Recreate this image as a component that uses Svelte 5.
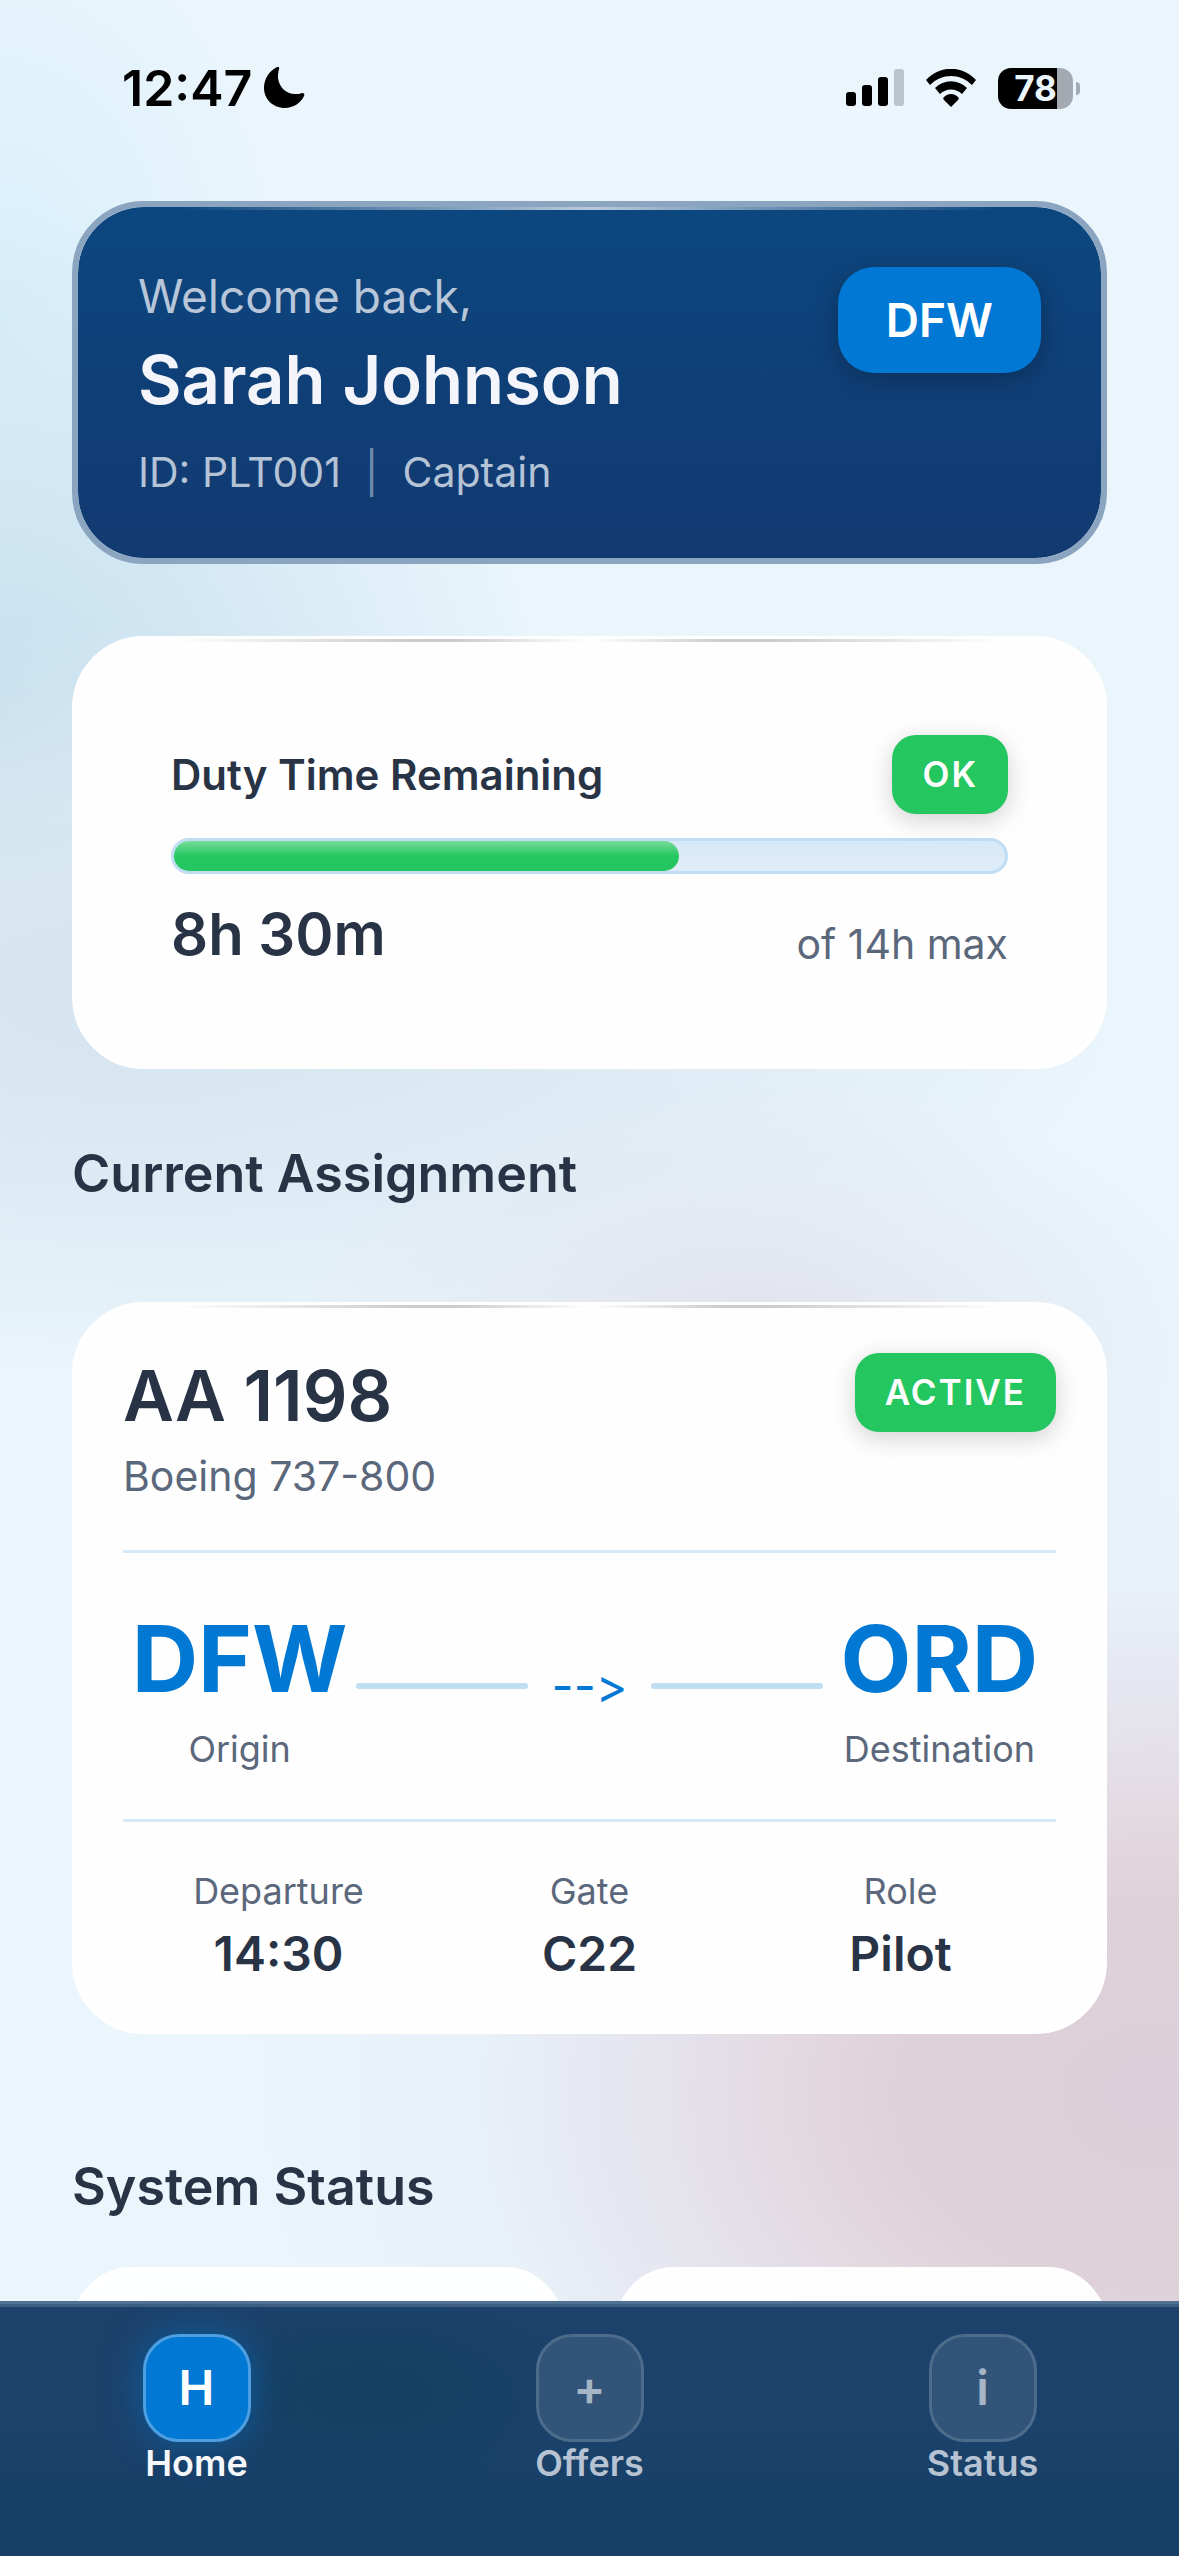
<script lang="ts">
  let active = 'Home';

  const dutyHours = 8.5;
  const maxHours = 14;

  const details = [
    { label: 'Departure', value: '14:30' },
    { label: 'Gate', value: 'C22' },
    { label: 'Role', value: 'Pilot' },
  ];

  const tabs = [
    { name: 'Home', glyph: 'H' },
    { name: 'Offers', glyph: '+' },
    { name: 'Status', glyph: 'i' },
  ];
</script>

<div class="app">
  <header class="status-bar">
    <div class="clock">
      <span>12:47</span>
      <svg width="42" height="42" viewBox="0 0 42 42" aria-hidden="true">
        <path d="M15 2C14 5 14 9 14 11c1 9 8 16 17 16 3 0 5 0 7-1 2 0 3 1 2 3-3 7-11 12-19 12C9 41 0 32 0 21 0 12 5 4 13 0c1 0 3 0 2 2z" />
      </svg>
    </div>
    <div class="signals">
      <svg width="58" height="38" viewBox="0 0 58 38" aria-hidden="true">
        <rect x="0" y="23" width="10" height="14" rx="3" />
        <rect x="16" y="16" width="10" height="21" rx="3" />
        <rect x="32" y="8" width="10" height="29" rx="3" />
        <rect x="48" y="0" width="10" height="37" rx="3" fill="#bbc4ca" />
      </svg>
      <svg width="50" height="38" viewBox="0 0 50 38" aria-hidden="true">
        <path d="M0 11C14-4 36-4 50 11l-4 5C34 4 16 4 4 16z" />
        <path d="M9 19c9-9 23-9 32 0l-5 6c-6-6-16-6-22 0z" />
        <path d="M18 28c4-4 10-4 14 0 1 1 1 2 0 3l-7 7-7-7c-1-1-1-2 0-3z" />
      </svg>
      <div class="battery"><span>78</span></div>
    </div>
  </header>

  <main>
    <section class="welcome">
      <div>
        <p class="greeting">Welcome back,</p>
        <h1>Sarah Johnson</h1>
        <p class="ident">
          <span>ID: PLT001</span><span class="pipe">|</span><span>Captain</span>
        </p>
      </div>
      <button class="base">DFW</button>
    </section>

    <section class="card duty">
      <div class="row">
        <h3 id="duty">Duty Time Remaining</h3>
        <span class="badge">OK</span>
      </div>
      <div class="track" role="progressbar" aria-labelledby="duty" aria-valuenow={dutyHours} aria-valuemax={maxHours}>
        <div class="fill" style="width: {(dutyHours / maxHours) * 100}%"></div>
      </div>
      <div class="row bottom">
        <strong>8h 30m</strong>
        <span class="muted">of 14h max</span>
      </div>
    </section>

    <h2>Current Assignment</h2>

    <section class="card flight">
      <div class="flight-head">
        <div>
          <h3>AA 1198</h3>
          <p class="muted">Boeing 737-800</p>
        </div>
        <span class="badge">ACTIVE</span>
      </div>

      <div class="route">
        <div class="stop">
          <strong>DFW</strong>
          <span>Origin</span>
        </div>
        <div class="path">
          <i></i>
          <span>--&gt;</span>
          <i></i>
        </div>
        <div class="stop">
          <strong>ORD</strong>
          <span>Destination</span>
        </div>
      </div>

      <dl>
        {#each details as item}
          <div>
            <dt>{item.label}</dt>
            <dd>{item.value}</dd>
          </div>
        {/each}
      </dl>
    </section>

    <h2 class="system">System Status</h2>

    <div class="systems">
      <article></article>
      <article></article>
    </div>
  </main>

  <nav>
    {#each tabs as tab}
      <button class:active={active === tab.name} on:click={() => (active = tab.name)}>
        <span class="icon">{tab.glyph}</span>
        <span>{tab.name}</span>
      </button>
    {/each}
  </nav>
</div>

<style>
  :global(body) {
    background: #eaf5fc;
  }

  .app {
    min-height: 100vh;
    box-sizing: border-box;
    font-family: Inter, "Liberation Sans", sans-serif;
    color: #283446;
    background:
      radial-gradient(ellipse 78% 27% at 98% 82%, #dccfd9 0%, #dfd1da 28%, #e3d9e1f0 42%, #e4e1ebd0 56%, #e7edf690 74%, #eaf5fc00 100%),
      radial-gradient(ellipse 40% 11% at 64% 53%, #e0e0e9 0%, #e3e6eeaa 45%, #eaf5fc00 100%),
      radial-gradient(ellipse 82% 15% at 14% 39%, #d6e4ef 0%, #dae8f2bb 50%, #eaf5fc00 100%),
      radial-gradient(ellipse 46% 20% at 0% 28%, #c5dfee 0%, #cde4f1bb 45%, #eaf5fc00 100%),
      radial-gradient(ellipse 24% 16% at 0% 12%, #d8effb 0%, #eaf5fc00 100%),
      #eaf5fc;
  }

  h1,
  h2,
  h3,
  p,
  dl,
  dd {
    margin: 0;
  }

  button {
    font: inherit;
    border: none;
    cursor: pointer;
  }

  .status-bar {
    display: flex;
    justify-content: space-between;
    align-items: center;
    height: 176px;
    padding: 0 98px 0 122px;
    box-sizing: border-box;
    color: #000;
  }

  .clock {
    display: flex;
    align-items: center;
    gap: 12px;
    font-size: 50px;
    font-weight: 600;
  }

  .signals {
    display: flex;
    align-items: center;
    gap: 22px;
  }

  .battery {
    position: relative;
    width: 75px;
    height: 41px;
    margin-right: 8px;
    border-radius: 13px;
    background: linear-gradient(90deg, #000 79%, #a4aab2 79%);
    color: #eaf5fc;
    font-size: 35px;
    font-weight: 700;
    line-height: 41px;
    text-align: center;
  }

  .battery::after {
    content: "";
    position: absolute;
    right: -7px;
    top: 14px;
    width: 4px;
    height: 13px;
    border-radius: 0 6px 6px 0;
    background: #a4aab2;
  }

  main {
    padding: 25px 72px 0;
  }

  .welcome {
    position: relative;
    display: flex;
    justify-content: space-between;
    align-items: flex-start;
    padding: 60px;
    border: 6px solid #8ba5c1;
    border-radius: 72px;
    background: linear-gradient(#0d477f, #0f3f77 50%, #123a71);
    background-clip: padding-box;
  }

  .welcome::before,
  .card::before {
    content: "";
    position: absolute;
    top: 0;
    left: 10%;
    right: 10%;
    height: 3px;
    background: linear-gradient(90deg, transparent, #b9cbdc, transparent);
  }

  .greeting {
    font-size: 46px;
    line-height: 58px;
    color: #b7c6d8;
  }

  h1 {
    margin-top: 12px;
    font-size: 67px;
    font-weight: 600;
    line-height: 86px;
    color: #f3f5fa;
  }

  .ident {
    display: flex;
    gap: 24px;
    margin-top: 24px;
    font-size: 41px;
    line-height: 51px;
    color: #b5c3d6;
  }

  .pipe {
    color: #7089aa;
  }

  .base {
    padding: 24px 48px;
    border-radius: 36px;
    background: #0078d4;
    box-shadow: 0 6px 24px #00000040;
    color: #fff;
    font-size: 46px;
    font-weight: 600;
    line-height: 58px;
  }

  .card {
    position: relative;
    border: 3px solid #fff;
    border-radius: 72px;
    background: #fefefe;
  }

  .card::before {
    background: linear-gradient(90deg, transparent, #ccc 28%, #ccc 34%, #fff 50%, #ccc 66%, #ccc 72%, transparent);
  }

  .duty {
    margin-top: 72px;
    padding: 96px;
  }

  .row,
  .flight-head {
    display: flex;
    justify-content: space-between;
    align-items: center;
  }

  .row h3 {
    font-size: 42px;
    font-weight: 600;
    line-height: 51px;
  }

  .row.bottom {
    align-items: flex-end;
    margin-top: 24px;
  }

  .row strong {
    font-size: 58px;
    font-weight: 600;
    line-height: 72px;
  }

  .muted {
    font-size: 41px;
    line-height: 51px;
    color: #5b677b;
  }

  .badge {
    padding: 18px 30px;
    border-radius: 24px;
    background: #24c660;
    box-shadow: 0 6px 24px #0000002e;
    color: #fff;
    font-size: 35px;
    font-weight: 600;
    line-height: 43px;
    letter-spacing: 2px;
  }

  .track {
    height: 30px;
    margin-top: 24px;
    border: 3px solid #bfddf3;
    border-radius: 18px;
    background: linear-gradient(#d7e8f6, #e1eef9);
  }

  .fill {
    height: 100%;
    border-radius: 15px;
    background: linear-gradient(#78dc9b, #24c660 50%);
  }

  h2 {
    margin: 72px 0 96px;
    font-size: 52px;
    font-weight: 600;
    line-height: 65px;
  }

  .flight {
    padding: 48px;
  }

  .flight-head {
    align-items: flex-start;
    padding-bottom: 48px;
    border-bottom: 3px solid #d7e9f7;
  }

  .flight-head h3 {
    font-size: 70px;
    font-weight: 600;
    line-height: 86px;
  }

  .flight-head p {
    margin-top: 12px;
  }

  .route {
    display: grid;
    grid-template-columns: 1fr 2fr 1fr;
    align-items: center;
    padding: 48px 0;
    border-bottom: 3px solid #d7e9f7;
  }

  .stop {
    display: flex;
    flex-direction: column;
    align-items: center;
    gap: 12px;
    font-size: 36px;
    line-height: 43px;
    color: #5b677b;
  }

  .stop strong {
    font-size: 92px;
    font-weight: 700;
    line-height: 115px;
    color: #0078d4;
  }

  .path {
    display: flex;
    align-items: center;
    gap: 24px;
  }

  .path i {
    flex: 1;
    height: 6px;
    border-radius: 3px;
    background: #bfddf3;
  }

  .path span {
    font-size: 48px;
    line-height: 58px;
    color: #0078d4;
    font-variant-ligatures: none;
    font-feature-settings: "calt" 0;
  }

  dl {
    display: grid;
    grid-template-columns: repeat(3, 1fr);
    padding-top: 48px;
    text-align: center;
  }

  dt {
    font-size: 36px;
    line-height: 43px;
    color: #5b677b;
  }

  dd {
    margin-top: 12px;
    font-size: 48px;
    font-weight: 600;
    line-height: 58px;
  }

  .system {
    margin: 120px 0 48px;
  }

  .systems {
    display: grid;
    grid-template-columns: 1fr 1fr;
    gap: 51px;
  }

  .systems article {
    height: 120px;
    border: 3px solid #fff;
    border-radius: 60px;
    background: #fffffff0;
  }

  nav {
    position: fixed;
    left: 0;
    right: 0;
    bottom: 0;
    display: grid;
    grid-template-columns: repeat(3, 1fr);
    padding: 27px 0 68px;
    border-top: 3px solid #4f7193;
    box-shadow: inset 0 3px #3c5f83;
    background:
      radial-gradient(ellipse 18% 40% at 31% 36%, #133f60, #133f6000),
      linear-gradient(#1c426b, #1b426b 50%, #174069 75%);
  }

  nav button {
    display: flex;
    flex-direction: column;
    align-items: center;
    padding: 3px 0;
    background: none;
    color: #b7c3d2;
    font-size: 36px;
    font-weight: 600;
    line-height: 43px;
  }

  .icon {
    width: 102px;
    height: 102px;
    border: 3px solid #4d6b8a;
    border-radius: 36px;
    background: #325478;
    color: #a6b5c6;
    font-size: 48px;
    line-height: 102px;
  }

  nav .active {
    color: #f5f7fa;
  }

  .active .icon {
    border-color: #4d9fe2;
    background: #0078d4;
    box-shadow: 0 0 36px #0078d480;
    color: #fff;
  }
</style>
